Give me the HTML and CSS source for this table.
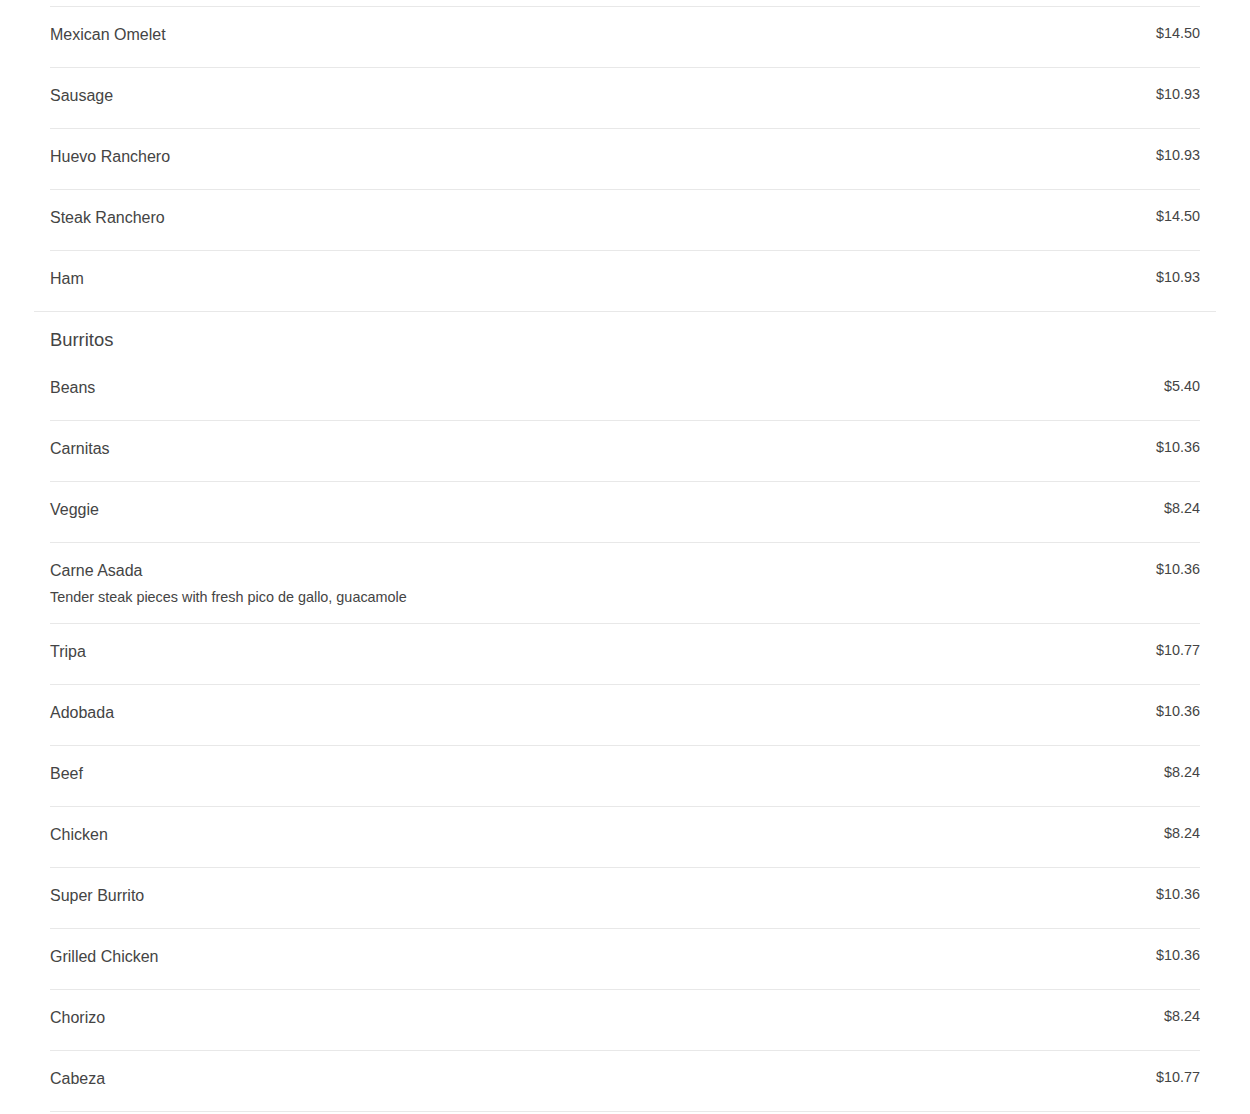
FILE: index.html
```html
<!DOCTYPE html>
<html lang="en">
<head>
  <meta charset="UTF-8" />
  <meta name="viewport" content="width=device-width, initial-scale=1.0"/>
  <title>Menu</title>
  <link rel="stylesheet" href="styles.css">
</head>
<body>

  <div class="menu">

    <div class="category category-continued">
      <div class="item">
        <div class="item-info"><div class="item-name">Mexican Omelet</div></div>
        <div class="item-price">$14.50</div>
      </div>
      <div class="item">
        <div class="item-info"><div class="item-name">Sausage</div></div>
        <div class="item-price">$10.93</div>
      </div>
      <div class="item">
        <div class="item-info"><div class="item-name">Huevo Ranchero</div></div>
        <div class="item-price">$10.93</div>
      </div>
      <div class="item">
        <div class="item-info"><div class="item-name">Steak Ranchero</div></div>
        <div class="item-price">$14.50</div>
      </div>
      <div class="item">
        <div class="item-info"><div class="item-name">Ham</div></div>
        <div class="item-price">$10.93</div>
      </div>
    </div>

    <div class="category">
      <h2 class="category-title">Burritos</h2>
      <div class="item">
        <div class="item-info"><div class="item-name">Beans</div></div>
        <div class="item-price">$5.40</div>
      </div>
      <div class="item">
        <div class="item-info"><div class="item-name">Carnitas</div></div>
        <div class="item-price">$10.36</div>
      </div>
      <div class="item">
        <div class="item-info"><div class="item-name">Veggie</div></div>
        <div class="item-price">$8.24</div>
      </div>
      <div class="item">
        <div class="item-info">
          <div class="item-name">Carne Asada</div>
          <div class="item-desc">Tender steak pieces with fresh pico de gallo, guacamole</div>
        </div>
        <div class="item-price">$10.36</div>
      </div>
      <div class="item">
        <div class="item-info"><div class="item-name">Tripa</div></div>
        <div class="item-price">$10.77</div>
      </div>
      <div class="item">
        <div class="item-info"><div class="item-name">Adobada</div></div>
        <div class="item-price">$10.36</div>
      </div>
      <div class="item">
        <div class="item-info"><div class="item-name">Beef</div></div>
        <div class="item-price">$8.24</div>
      </div>
      <div class="item">
        <div class="item-info"><div class="item-name">Chicken</div></div>
        <div class="item-price">$8.24</div>
      </div>
      <div class="item">
        <div class="item-info"><div class="item-name">Super Burrito</div></div>
        <div class="item-price">$10.36</div>
      </div>
      <div class="item">
        <div class="item-info"><div class="item-name">Grilled Chicken</div></div>
        <div class="item-price">$10.36</div>
      </div>
      <div class="item">
        <div class="item-info"><div class="item-name">Chorizo</div></div>
        <div class="item-price">$8.24</div>
      </div>
      <div class="item">
        <div class="item-info"><div class="item-name">Cabeza</div></div>
        <div class="item-price">$10.77</div>
      </div>
    </div>

  </div>

</body>
</html>
```

FILE: styles.css
```css
* {
  margin: 0;
  padding: 0;
  box-sizing: border-box;
}

body {
  font-family: 'Liberation Sans', Arial, sans-serif;
  background: #fff;
  color: #444;
}

.menu {
  margin: 0 34px;
}

.category {
  border-top: 1px solid #e8e8e8;
  padding: 14px 16px 0;
}

/* first block is the tail of the previous section, scrolled off the top */
.category-continued {
  border-top: none;
  padding-top: 0;
}

.category-continued .item:first-child {
  margin-top: 6px;
  border-top: 1px solid #e8e8e8;
}

.category:last-child .item:last-child {
  border-bottom: 1px solid #e8e8e8;
}

.category-title {
  font-size: 1.15rem;
  font-weight: normal;
  line-height: 27px;
  color: #444;
  margin-bottom: 7px;
}

.item {
  display: flex;
  justify-content: space-between;
  align-items: flex-start;
  padding: 16px 0;
}

.item + .item {
  border-top: 1px solid #e8e8e8;
}

.item-name {
  font-size: 1rem;
  line-height: 24px;
  margin-bottom: 4px;
  color: #444;
}

.item-desc {
  font-size: 0.9rem;
  line-height: 20px;
  color: #444;
}

.item-price {
  font-size: 0.9rem;
  line-height: 20px;
  color: #444;
}
```
